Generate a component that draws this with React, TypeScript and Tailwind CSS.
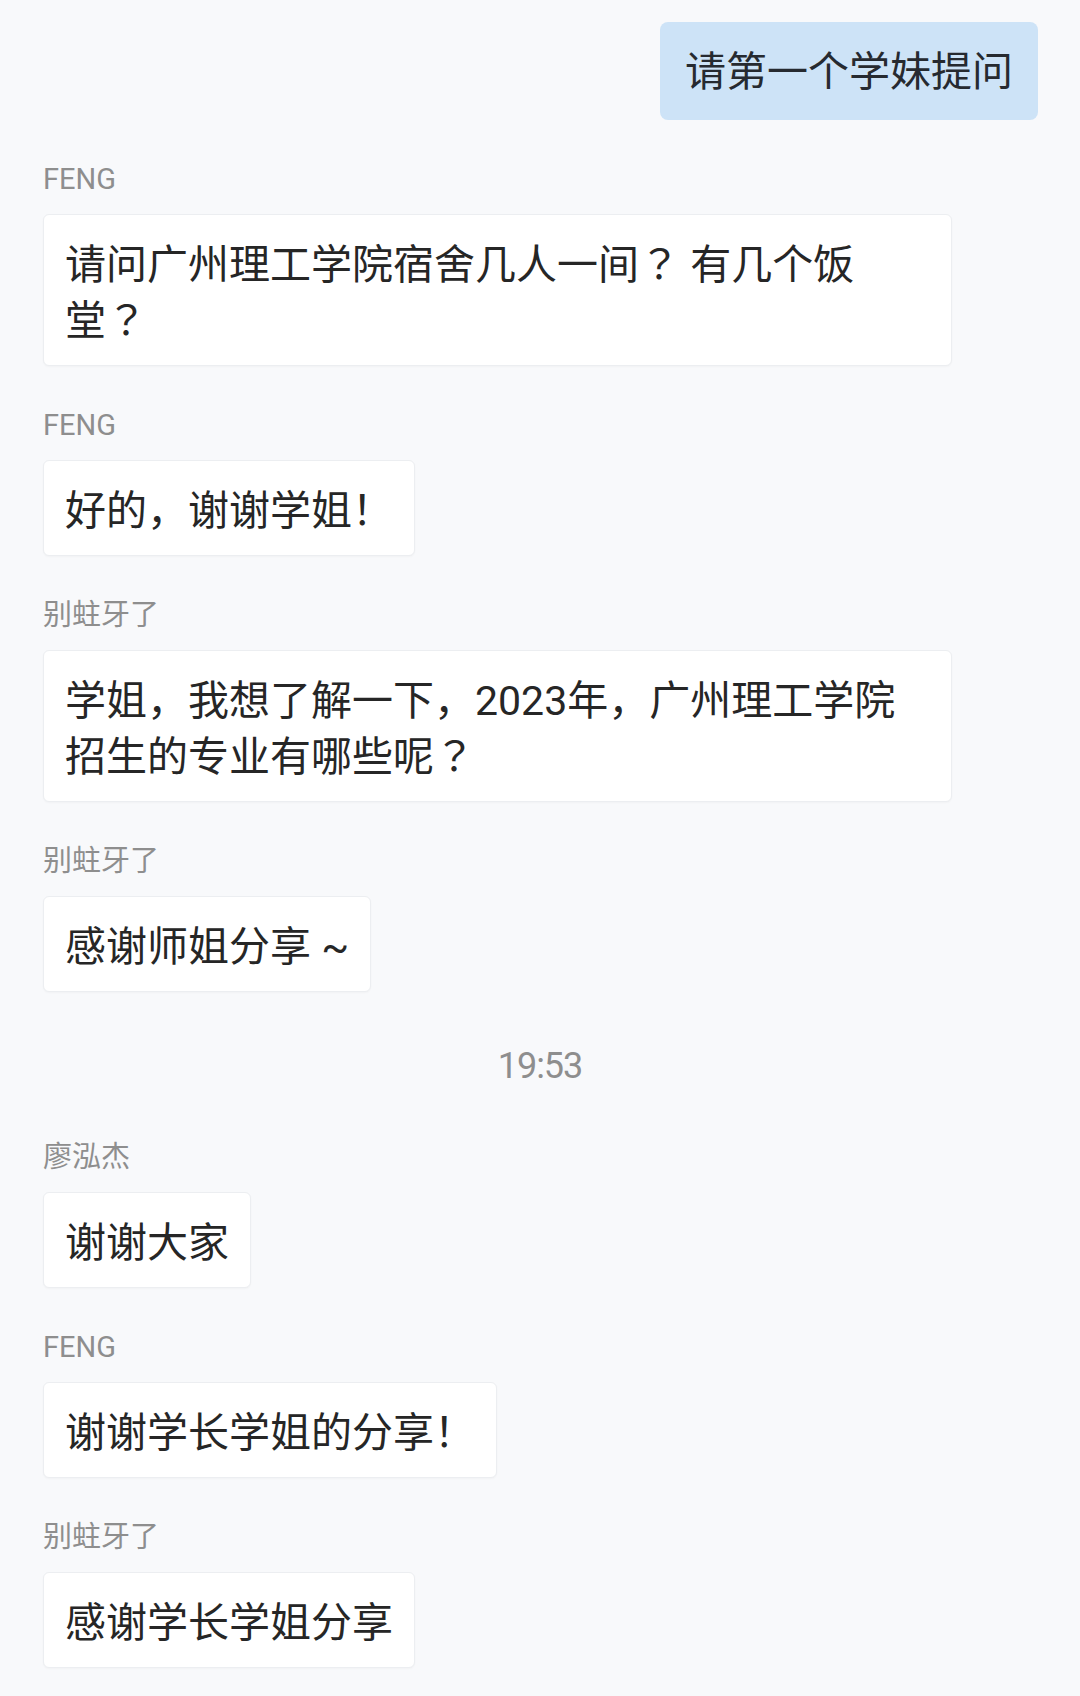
import React from "react";

const font = { fontFamily: 'Roboto, "Noto Sans CJK SC", sans-serif' };

function Q() {
  return (
    <span className="inline-block leading-none [font-family:'Noto_Sans_CJK_TC',sans-serif]">
      ？
    </span>
  );
}

function Name({ children }: { children: React.ReactNode }) {
  return (
    <div className="mt-[41px] text-[29px] leading-[36px] text-[#8e8e8e]">{children}</div>
  );
}

function Bubble({ children, wide }: { children: React.ReactNode; wide?: boolean }) {
  return (
    <div
      className={
        (wide ? "w-[909px] " : "w-fit ") +
        "mt-[17px] rounded-[6px] border border-[#eceef1] bg-white px-[21px] pt-[22px] pb-[16px] text-[41px] leading-[56px] text-[#262626] shadow-[0_1px_2px_rgba(0,0,0,0.03)]"
      }
    >
      {children}
    </div>
  );
}

export default function App() {
  return (
    <div className="min-h-[1696px] w-[1080px] bg-[#f8f9fb] pb-[40px]" style={font}>
      <div className="flex justify-end pr-[42px] pt-[22px]">
        <div className="rounded-[8px] bg-[#cde3f7] px-[25px] pt-[22px] pb-[20px] text-[41px] leading-[56px] text-[#262a30]">
          请第一个学妹提问
        </div>
      </div>
      <div className="pl-[43px]">
        <Name>FENG</Name>
        <Bubble wide>
          请问广州理工学院宿舍几人一间<Q /> 有几个饭
          <br />
          堂<Q />
        </Bubble>
        <Name>FENG</Name>
        <Bubble>好的，谢谢学姐！</Bubble>
        <Name>别蛀牙了</Name>
        <Bubble wide>
          学姐，我想了解一下，2023年，广州理工学院
          <br />
          招生的专业有哪些呢<Q />
        </Bubble>
        <Name>别蛀牙了</Name>
        <Bubble>感谢师姐分享 ~</Bubble>
      </div>
      <div className="mt-[54px] text-center text-[36px] leading-[40px] tracking-[-1px] text-[#8e8e8e]">
        19:53
      </div>
      <div className="pl-[43px] pt-[12px]">
        <Name>廖泓杰</Name>
        <Bubble>谢谢大家</Bubble>
        <Name>FENG</Name>
        <Bubble>谢谢学长学姐的分享！</Bubble>
        <Name>别蛀牙了</Name>
        <Bubble>感谢学长学姐分享</Bubble>
      </div>
    </div>
  );
}
